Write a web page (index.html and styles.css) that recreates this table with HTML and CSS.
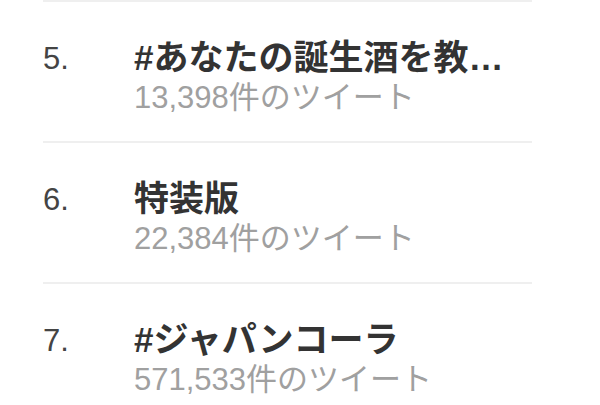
FILE: index.html
```html
<!DOCTYPE html>
<html lang="ja">
<head>
  <meta charset="UTF-8" />
  <meta name="viewport" content="width=device-width, initial-scale=1.0" />
  <title>トレンド</title>
  <link rel="stylesheet" href="styles.css">
</head>
<body>
  <ul class="trends">
    <li class="trend">
      <span class="rank">5.</span>
      <div class="info">
        <div class="name">#あなたの誕生酒を教えて</div>
        <div class="count">13,398件のツイート</div>
      </div>
    </li>
    <li class="trend">
      <span class="rank">6.</span>
      <div class="info">
        <div class="name">特装版</div>
        <div class="count">22,384件のツイート</div>
      </div>
    </li>
    <li class="trend">
      <span class="rank">7.</span>
      <div class="info">
        <div class="name">#ジャパンコーラ</div>
        <div class="count">571,533件のツイート</div>
      </div>
    </li>
  </ul>
</body>
</html>
```

FILE: styles.css
```css
body {
  margin: 0;
  background-color: #ffffff;
  font-family: "Liberation Sans", "Noto Sans CJK JP", sans-serif;
  overflow: hidden;
}

.trends {
  list-style: none;
  margin: 0 0 0 43px;
  padding: 0;
  width: 489px;
}

.trend {
  display: flex;
  height: 139px;
  border-top: 2px solid #efefef;
}

.rank {
  width: 91px;
  flex-shrink: 0;
  padding-top: 35px;
  font-size: 31px;
  line-height: 44px;
  color: #444444;
}

.info {
  min-width: 0;
  padding-top: 35px;
}

.name {
  width: 384px;
  font-size: 35px;
  line-height: 42px;
  font-weight: bold;
  color: #333333;
  white-space: nowrap;
  overflow: hidden;
  text-overflow: ellipsis;
}

.count {
  font-size: 31px;
  line-height: 38px;
  color: #a0a0a0;
  white-space: nowrap;
}
```
